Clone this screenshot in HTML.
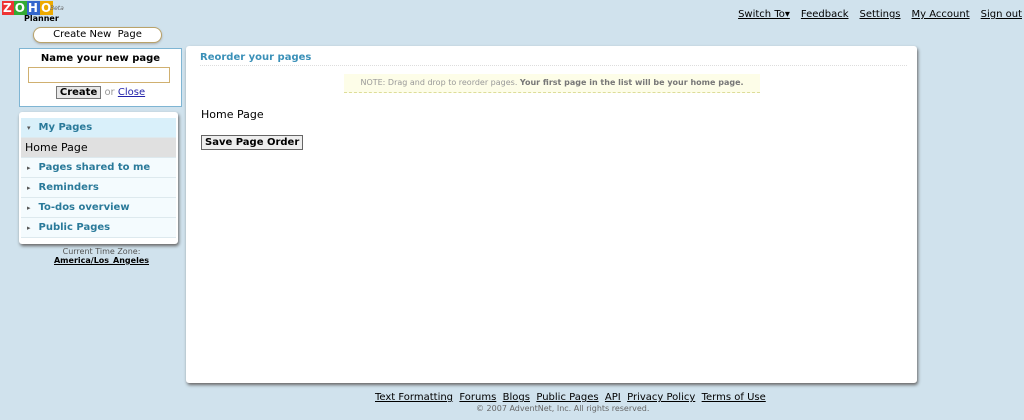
<!DOCTYPE html>
<html><head><style>
body{margin:0;width:1024px;height:420px;background:#d0e2ed;font-family:"DejaVu Sans","Liberation Sans",sans-serif;position:relative;overflow:hidden;color:#000}
.a{position:absolute}
a{color:#000;text-decoration:underline}
.top a{margin-left:11px;font-size:10px}
.nav div{height:19px;border-bottom:1px solid #dde9ee;font-size:10px;font-weight:bold;color:#2a7a9a;line-height:19px;padding-left:6px}
.nav span{font-size:7px;color:#555;margin-right:8px}
</style></head><body>
<div class="a" style="left:2px;top:1px;font-weight:bold;font-size:12px;letter-spacing:1px"><span style="color:#fff;background:#e33;padding:0 1px">Z</span><span style="color:#fff;background:#3a3;padding:0 1px">O</span><span style="color:#fff;background:#36c;padding:0 1px">H</span><span style="color:#fff;background:#ea0;padding:0 1px">O</span></div>
<div class="a" style="left:50px;top:5px;font-size:6px;font-style:italic;color:#666">Beta</div>
<div class="a" style="left:24px;top:14px;font-size:8px;font-weight:bold">Planner</div>
<div class="a top" style="right:2px;top:2px"><a>Switch To▾</a><a>Feedback</a><a>Settings</a><a>My Account</a><a>Sign out</a></div>
<div class="a" style="left:33px;top:27px;width:127px;height:14px;border:1px solid #b9a36a;border-radius:8px;background:#fff;box-shadow:0 1px 2px #aaa;font-size:10px;text-align:center;line-height:14px">Create New &nbsp;Page</div>
<div class="a" style="left:19px;top:48px;width:161px;height:57px;background:#fff;border:1px solid #7fb5d3">
 <div style="text-align:center;font-size:10px;font-weight:bold;margin-top:4px">Name your new page</div>
 <div style="margin:3px 0 0 8px;width:140px;height:14px;border:1px solid #d0b070"></div>
 <div style="text-align:center;font-size:10px;margin-top:4px"><span style="border:1px solid #777;background:#e8e8e8;padding:0 3px;font-weight:bold">Create</span> <span style="color:#999">or</span> <a style="color:#22a">Close</a></div>
</div>
<div class="a nav" style="left:19px;top:112px;width:159px;height:126px;background:#fff;border-radius:3px;box-shadow:1px 2px 3px #666;padding:6px 0 0 0">
 <div style="background:#d9f0fa;margin:0 2px"><span>▾</span>My Pages</div>
 <div style="background:#e0e0e0;color:#000;font-weight:normal;font-size:11px;padding-left:4px;margin:0 2px">Home Page</div>
 <div style="background:#f4fbfe;margin:0 2px"><span>▸</span>Pages shared to me</div>
 <div style="background:#f4fbfe;margin:0 2px"><span>▸</span>Reminders</div>
 <div style="background:#f4fbfe;margin:0 2px"><span>▸</span>To-dos overview</div>
 <div style="background:#f4fbfe;margin:0 2px"><span>▸</span>Public Pages</div>
</div>
<div class="a" style="left:19px;top:247px;width:165px;text-align:center;font-size:8px;color:#555">Current Time Zone:<br><b><u style="color:#000">America/Los_Angeles</u></b></div>
<div class="a" style="left:186px;top:46px;width:731px;height:337px;background:#fff;border-radius:3px;box-shadow:1px 2px 3px #666">
 <div style="margin:6px 10px 0 14px;font-size:10px;font-weight:bold;color:#3a90b8;border-bottom:1px dotted #ddd;padding-bottom:2px">Reorder your pages</div>
 <div style="position:absolute;left:158px;top:28px;width:416px;height:18px;background:#fdfde8;border-bottom:1px dashed #dd9;font-size:8px;color:#999;line-height:18px;text-align:center;white-space:nowrap">NOTE: Drag and drop to reorder pages. <b style="color:#777">Your first page in the list will be your home page.</b></div>
 <div style="position:absolute;left:15px;top:62px;font-size:11px">Home Page</div>
 <div style="position:absolute;left:15px;top:89px;border:1px solid #666;background:#eee;font-size:10px;font-weight:bold;padding:1px 3px">Save Page Order</div>
</div>
<div class="a" style="left:375px;top:392px;font-size:10px;white-space:nowrap"><a>Text Formatting</a>&nbsp; <a>Forums</a>&nbsp; <a>Blogs</a>&nbsp; <a>Public Pages</a>&nbsp; <a>API</a>&nbsp; <a>Privacy Policy</a>&nbsp; <a>Terms of Use</a></div>
<div class="a" style="left:476px;top:404px;font-size:8px;color:#666">© 2007 AdventNet, Inc. All rights reserved.</div>
</body></html>
